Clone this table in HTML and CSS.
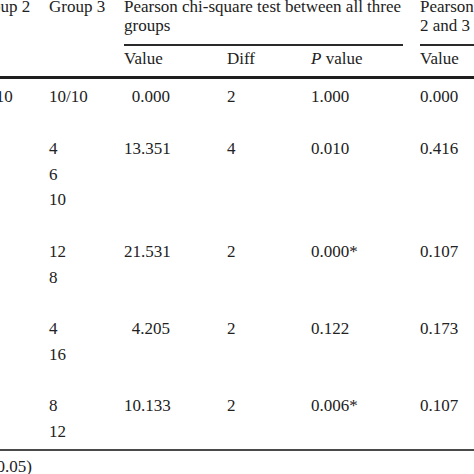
FILE: index.html
```html
<!DOCTYPE html>
<html lang="en">
<head>
    <meta charset="UTF-8">
    <meta name="viewport" content="width=device-width, initial-scale=1.0">
    <title>Chi-square comparison of groups</title>
    <link rel="stylesheet" href="styles.css">
</head>
<body>

<div class="sheet">
    <table class="stats">
        <colgroup>
            <col class="c-group2">
            <col class="c-group3">
            <col class="c-value">
            <col class="c-diff">
            <col class="c-p">
            <col class="c-pair">
        </colgroup>
        <thead>
            <tr class="head-top">
                <th>Group 2</th>
                <th>Group 3</th>
                <th colspan="3"><div class="span-head">Pearson chi-square test between all three<br>groups</div></th>
                <th><div class="span-head last">Pearson chi-square test between groups<br>2 and 3</div></th>
            </tr>
            <tr class="head-sub">
                <th></th>
                <th></th>
                <th>Value</th>
                <th>Diff</th>
                <th><i>P</i> value</th>
                <th>Value</th>
            </tr>
        </thead>
        <tbody>
            <tr class="first">
                <td>10/10</td>
                <td>10/10</td>
                <td><span class="num">0.000</span></td>
                <td>2</td>
                <td>1.000</td>
                <td>0.000</td>
            </tr>
            <tr>
                <td>2<br>7<br>11</td>
                <td>4<br>6<br>10</td>
                <td><span class="num">13.351</span></td>
                <td>4</td>
                <td>0.010</td>
                <td>0.416</td>
            </tr>
            <tr>
                <td>8<br>12</td>
                <td>12<br>8</td>
                <td><span class="num">21.531</span></td>
                <td>2</td>
                <td>0.000*</td>
                <td>0.107</td>
            </tr>
            <tr>
                <td>7<br>13</td>
                <td>4<br>16</td>
                <td><span class="num">4.205</span></td>
                <td>2</td>
                <td>0.122</td>
                <td>0.173</td>
            </tr>
            <tr class="last">
                <td>4<br>16</td>
                <td>8<br>12</td>
                <td><span class="num">10.133</span></td>
                <td>2</td>
                <td>0.006*</td>
                <td>0.107</td>
            </tr>
        </tbody>
    </table>
    <div class="note">* Statistically significant difference (<i>P</i> &lt; 0.05)</div>
</div>

</body>
</html>
```

FILE: styles.css
```css
body {
    margin: 0;
    background: #fff;
    color: #222;
    font-family: 'Liberation Serif', 'Times New Roman', serif;
    font-size: 17px;
}

.sheet {
    width: 474px;
    height: 474px;
    overflow: hidden;
}

.stats {
    table-layout: fixed;
    width: 526px;
    margin: -3.5px 0 0 -26px;
    border-collapse: separate;
    border-spacing: 0;
}

.c-group2 { width: 75px; }
.c-group3 { width: 75px; }
.c-value  { width: 103px; }
.c-diff   { width: 84px; }
.c-p      { width: 109px; }
.c-pair   { width: 80px; }

.stats th {
    font-weight: normal;
    text-align: left;
    vertical-align: top;
    padding: 0;
    line-height: 19.5px;
    white-space: nowrap;
}

.head-top th {
    padding-bottom: 8px;
}

.span-head {
    margin-right: 17px;
    padding-bottom: 8px;
    margin-bottom: -8px;
    border-bottom: 2px solid #2a2a2a;
}

.span-head.last {
    margin-right: -200px;
}

.head-sub th {
    padding-top: 3px;
    padding-bottom: 8px;
    border-bottom: 3px solid #1e1e1e;
}

.stats td {
    padding: 0 0 25.75px 0;
    vertical-align: top;
    line-height: 25.75px;
    white-space: nowrap;
}

.stats tr.first td {
    padding-top: 5.4px;
}

.stats tr.last td {
    padding-bottom: 4px;
    border-bottom: 2px solid #4a4a4a;
}

.num {
    display: inline-block;
    width: 46px;
    text-align: right;
}

.note {
    display: flex;
    justify-content: flex-end;
    width: 32px;
    margin-top: 6px;
    line-height: 19.5px;
    white-space: nowrap;
}
```
